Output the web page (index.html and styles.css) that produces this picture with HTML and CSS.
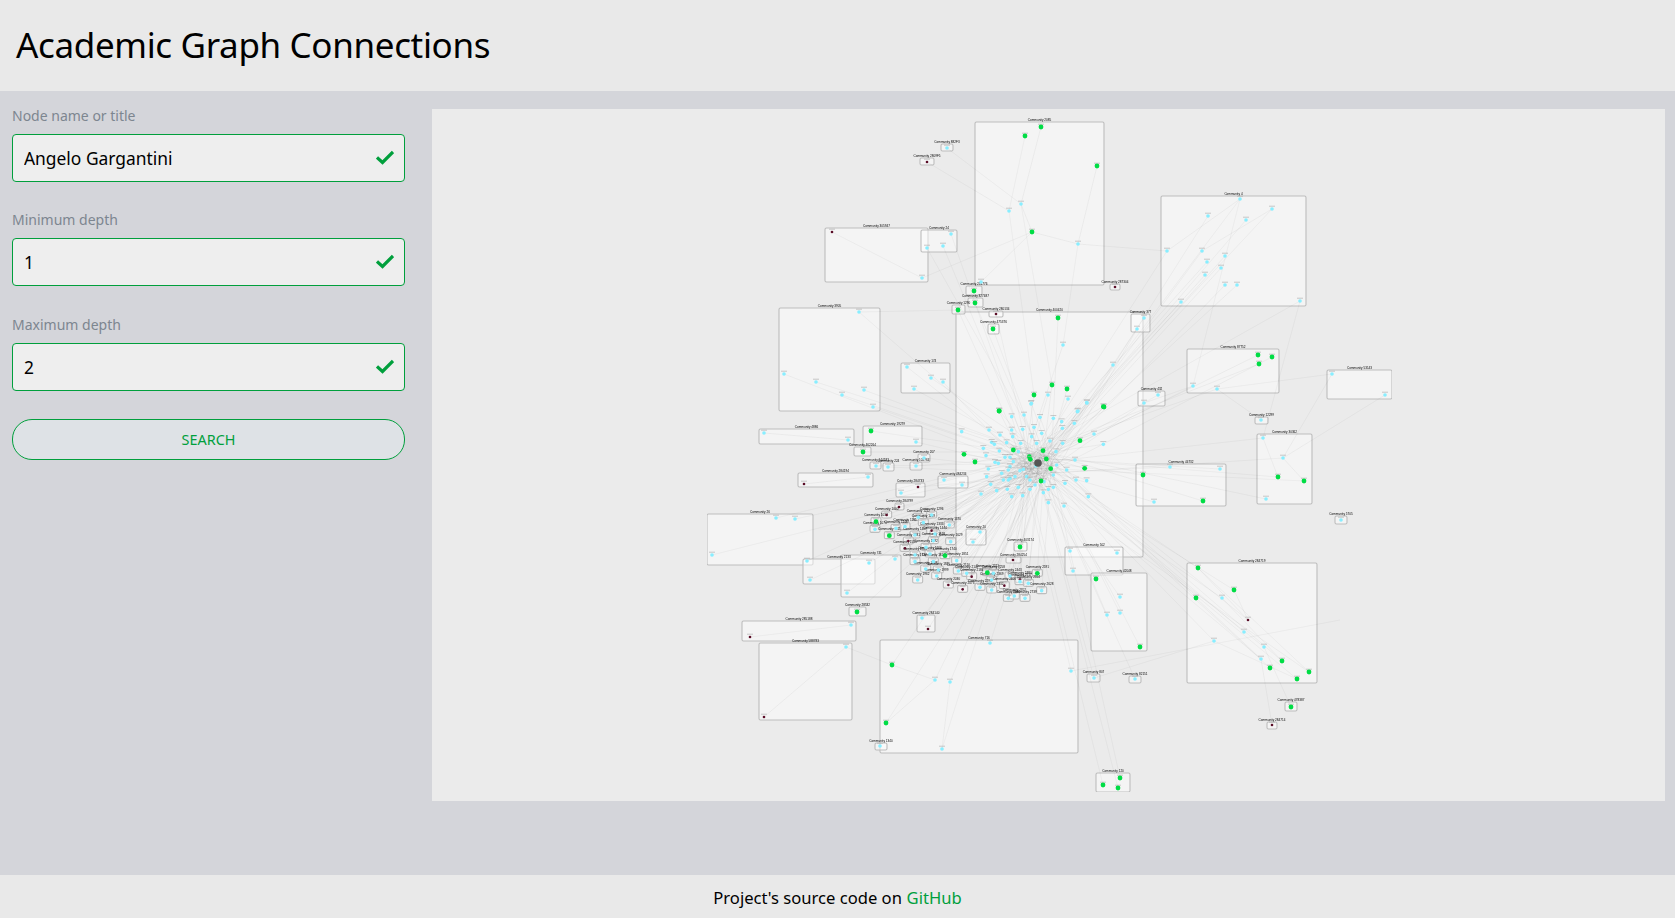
FILE: index.html
```html
<!DOCTYPE html>
<html lang="en">
<head>
    <meta charset="UTF-8">
    <meta name="viewport" content="width=device-width, initial-scale=1.0">
    <title>Academic Graph Connections</title>
    <link rel="stylesheet" href="styles.css">
</head>
<body>
    <header class="top-bar">
        <h1>Academic Graph Connections</h1>
    </header>

    <main class="content">
        <form class="search-form">
            <div class="field">
                <label for="nodeName">Node name or title</label>
                <div class="input-wrap">
                    <input id="nodeName" type="text" value="Angelo Gargantini">
                    <svg class="check" viewBox="0 0 18 14"><polyline points="1,7 6.5,12 17,1.5"/></svg>
                </div>
            </div>
            <div class="field">
                <label for="minDepth">Minimum depth</label>
                <div class="input-wrap">
                    <input id="minDepth" type="text" value="1">
                    <svg class="check" viewBox="0 0 18 14"><polyline points="1,7 6.5,12 17,1.5"/></svg>
                </div>
            </div>
            <div class="field">
                <label for="maxDepth">Maximum depth</label>
                <div class="input-wrap">
                    <input id="maxDepth" type="text" value="2">
                    <svg class="check" viewBox="0 0 18 14"><polyline points="1,7 6.5,12 17,1.5"/></svg>
                </div>
            </div>
            <button type="button" class="search-btn">SEARCH</button>
        </form>

        <div class="graph-panel">
            <!-- viewBox uses page coordinates so the data in graph.js is easy to read -->
            <svg id="graph" viewBox="432 109 1233 692">
                <defs>
                    <filter id="soft" x="0" y="0" width="100%" height="100%">
                        <feGaussianBlur stdDeviation="0.55"/>
                    </filter>
                </defs>
            </svg>
        </div>
    </main>

    <footer class="bottom-bar">
        Project's source code on <a href="#">GitHub</a>
    </footer>

    <script src="graph.js"></script>
</body>
</html>
```

FILE: styles.css
```css
* {
    box-sizing: border-box;
}
body {
    font-family: 'Noto Sans', sans-serif;
    margin: 0;
    min-height: 918px;
    display: flex;
    flex-direction: column;
    background-color: #d4d5da;
    color: #000;
}
.top-bar {
    height: 91px;
    display: flex;
    align-items: center;
    padding: 0 0 2px 16px;
    background-color: #e9e9e9;
}
.top-bar h1 {
    margin: 0;
    font-size: 35px;
    font-weight: 400;
    letter-spacing: -0.35px;
}
.content {
    flex: 1;
    display: grid;
    grid-template-columns: 432px 1fr;
    align-items: start;
}
.search-form {
    padding: 13px 27px 0 12px;
}
.field {
    margin-bottom: 26.4px;
}
.field label {
    display: block;
    height: 24px;
    margin-bottom: 6px;
    font-size: 14px;
    line-height: 24px;
    color: #7d8690;
}
.input-wrap {
    position: relative;
}
.input-wrap input {
    display: block;
    width: 100%;
    height: 48px;
    padding: 0 50px 0 11px;
    border: 1px solid #009f3c;
    border-radius: 4px;
    background-color: #eee;
    font-family: inherit;
    font-size: 17.4px;
    color: #000;
}
.check {
    position: absolute;
    top: 16px;
    right: 11px;
    width: 18px;
    height: 15px;
}
.check polyline {
    fill: none;
    stroke: #009f3c;
    stroke-width: 3.2;
}
.search-btn {
    display: block;
    width: 100%;
    height: 41px;
    margin-top: 28.4px;
    border: 1px solid #009f3c;
    border-radius: 20px;
    background-color: #dee2e6;
    font-family: inherit;
    font-size: 14.4px;
    color: #009f3c;
}
.graph-panel {
    height: 692px;
    margin: 18px 10px 0 0;
    background-color: #ebebeb;
}
#graph {
    display: block;
    width: 100%;
    height: 100%;
}
.box {
    fill: rgba(255, 255, 255, 0.45);
    stroke: #bdbdbd;
    stroke-width: 1.1;
}
.edge {
    stroke: rgba(0, 0, 0, 0.06);
    stroke-width: 0.7;
}
.box-label {
    font-family: 'Liberation Sans', sans-serif;
    font-size: 3.1px;
    fill: #000;
    text-anchor: middle;
}
.node-tag {
    stroke: #aaa;
    stroke-width: 0.6;
}
.node-c {
    fill: #88eeff;
}
.node-g {
    fill: #00dd44;
}
.node-m {
    fill: #5a0a28;
}
.hub {
    fill: #555;
}
.bottom-bar {
    height: 43px;
    display: flex;
    align-items: center;
    justify-content: center;
    gap: 0.28em;
    padding-top: 1px;
    background-color: #e9e9e9;
    font-size: 16.6px;
}
.bottom-bar a {
    color: #009f3c;
    text-decoration: none;
}
```

FILE: graph.js
```js
// each community: x0, y0, x1, y1, id, linked to hub?, nodes as type x y
const communities = [
    [975,122,1104,285,'2085',0,'g1041,127 g1025,136 g1097,166 g1032,232 c1021,204 c1009,211 c1078,244 c981,282'],
    [941,144,953,151,'882F3',0,'c947,148'],
    [920,158,934,165,'2809F5',0,'m927,162'],
    [825,228,928,282,'305947',0,'m832,232 c922,278'],
    [921,230,957,252,'24',1,'c951,234 c943,246 c927,248'],
    [956,312,1143,557,'400420',1,'g1058,318 c1063,345 c1113,365 g1052,385 g1067,389 g1034,395 c1048,395 c1068,399 c1087,403 g1104,407 g999,411 c1031,404 c1078,411'],
    [966,286,982,295,'251776',0,'g974,291'],
    [968,298,983,307,'327487',1,'g975,303'],
    [952,305,965,314,'1290',1,'g958,310'],
    [989,311,1003,317,'280134',1,'m996,314'],
    [988,324,999,334,'475376',1,'g993,329'],
    [1131,314,1150,332,'377',1,'c1144,318 c1137,329'],
    [779,308,880,411,'3905',1,'c859,312 c784,374 c816,382 c842,395 c864,390 c873,407'],
    [901,363,950,393,'174',1,'c907,367 c931,378 c943,382 c914,389'],
    [1138,391,1165,406,'432',1,'c1158,395 c1144,403'],
    [759,429,854,444,'4886',0,'c764,433 c848,440'],
    [863,426,922,446,'19279',1,'g871,431 c916,442'],
    [854,447,871,456,'462264',1,'g863,452'],
    [870,462,881,469,'144183',1,'c876,466'],
    [883,463,894,471,'224',1,'c888,467'],
    [910,462,922,470,'102764',1,'c916,466'],
    [918,454,930,462,'207',1,'c924,458'],
    [798,473,873,487,'284194',0,'m804,484 c868,477'],
    [938,476,968,488,'484234',1,'c944,480 c962,485'],
    [896,483,925,497,'284733',1,'m918,487 c901,493'],
    [895,503,904,510,'284799',1,'m899,507'],
    [707,514,813,565,'26',1,'c776,518 c795,519 c712,555'],
    [803,559,875,584,'2133',1,'c807,561 c810,580'],
    [841,555,901,597,'741',1,'c869,563 c895,559 c847,593'],
    [966,529,986,545,'20',1,'c980,532 c973,542'],
    [1014,542,1027,551,'403174',1,'g1020,547'],
    [1006,557,1021,563,'284254',1,'m1013,560'],
    [1065,547,1123,575,'502',1,'c1070,551 c1117,553 c1073,571'],
    [1091,573,1147,651,'42048',1,'g1096,579 c1120,597 c1107,615 c1120,613 g1140,647'],
    [849,607,866,616,'28532',1,'g857,612'],
    [917,615,935,632,'284140',1,'c922,618 m928,629'],
    [742,621,856,641,'285188',0,'m750,637 c851,625'],
    [759,643,852,720,'588783',0,'c846,647 m764,717'],
    [880,640,1078,753,'716',1,'c990,643 c1071,671 g892,665 c935,680 c950,682 g886,723 c942,749'],
    [875,743,887,750,'1340',0,'c880,746'],
    [1087,674,1100,682,'807',1,'c1094,678'],
    [1129,676,1141,683,'82151',1,'c1135,679'],
    [1096,773,1130,792,'120',1,'g1120,778 g1103,785 g1118,788'],
    [1187,563,1317,683,'284719',1,'g1198,568 g1234,590 g1196,598 c1222,598 m1248,620 c1244,632 c1214,641 c1264,647 c1261,659 g1282,661 g1270,668 g1309,672 g1297,679'],
    [1285,702,1297,711,'478387',0,'g1291,707'],
    [1267,722,1277,729,'284714',0,'m1272,725'],
    [1161,196,1306,306,'4',1,'c1240,199 c1272,209 c1208,216 c1246,220 c1167,251 c1202,251 c1225,256 c1207,262 c1221,268 c1205,275 c1225,285 c1237,285 c1181,302 c1300,301'],
    [1187,349,1279,393,'87752',1,'g1258,355 g1272,357 g1259,364 c1193,386 c1217,389'],
    [1327,370,1392,399,'53143',0,'c1332,374 c1385,395'],
    [1255,417,1268,424,'12299',0,'c1261,420'],
    [1257,434,1312,504,'30362',1,'c1263,438 c1283,458 g1278,477 g1304,481 c1266,499'],
    [1136,464,1226,506,'44732',1,'g1143,475 c1170,467 c1220,469 c1154,502 g1203,501'],
    [1110,284,1120,290,'287304',0,'m1115,287'],
    [1335,516,1347,524,'5705',0,'c1341,520']
];

// dense pile of tiny communities, coordinates are (x-860)*3 and (y-500)*3
const pile = 'm80,45 g48,65 c45,88 g88,107 c108,85 c135,80 c175,52 c190,68 c215,45 m215,92 c268,75 c165,105 c225,102 m145,123 c220,122 m135,145 c198,142 c272,125 c210,162 c165,165 g255,167 c165,185 c220,185 c290,182 c197,207 c235,210 c173,240 c230,228 m265,255 m308,268 c295,213 c320,220 m335,230 g382,218 c400,220 c360,262 c395,270 c395,240 m433,257 c450,228 m480,238 c480,245 c505,250 g532,220 c545,272 c445,295 c463,288 c495,295';

// nodes around the hub, coordinates are (x-950)*3 and (y-400)*3
const core = 'c244,10 c185,50 c222,45 c410,8 c382,35 c270,52 c310,55 c335,65 c373,70 c252,82 c218,88 c337,85 c117,90 c35,95 c185,90 c432,102 c150,105 c275,100 c188,110 c245,110 c300,123 c338,130 c125,127 c133,133 c170,128 c212,130 c260,130 c460,133 c100,145 c148,153 c205,155 c318,155 c108,167 c165,172 c180,172 c375,180 c135,187 c145,190 c190,185 c258,198 c115,207 c180,200 c175,210 c210,212 c350,210 c320,195 c220,208 c155,220 c110,230 c180,235 c195,230 c230,230 c310,225 c378,240 c410,242 c240,240 c282,245 c122,253 c175,240 c160,240 c205,262 c240,268 c280,278 c345,250 c310,262 c140,272 c172,268 c295,268 c93,282 c185,290 c218,287 c415,290 c295,308 c342,318 c255,255 g148,33 g460,20 g390,122 g190,150 g279,152 g42,163 g75,186 g238,170 g241,178 g289,177 g302,206 g404,205 g273,243';

const extraEdges = [
    [1025,136,1009,211], [1041,127,1021,204], [1097,166,1078,244], [1021,204,1032,232],
    [1032,232,1078,244], [1078,244,1167,251], [981,282,1032,232], [1032,232,922,278],
    [1021,204,947,148], [1009,211,927,162], [832,232,922,278], [1078,244,1063,345],
    [1009,211,1034,395], [1021,204,1052,385], [859,312,958,310], [1332,374,1217,389],
    [1385,395,1283,458], [1217,389,1261,420], [1300,301,1263,438], [1193,386,1144,403],
    [764,433,848,440], [804,484,868,477], [750,637,851,625], [846,647,764,717],
    [846,647,892,665], [892,665,935,680], [935,680,886,723], [950,682,942,749],
    [1071,671,1340,620], [1198,568,1248,620], [1234,590,1248,620], [1196,598,1261,659],
    [1222,598,1282,661], [1193,386,1240,199], [1167,251,1240,199], [1202,251,1272,209],
    [1198,568,1309,672], [1264,647,1291,707], [1261,659,1272,725], [1214,641,1297,679],
    [1214,641,1094,678], [1263,438,1278,477], [1283,458,1304,481], [1283,458,1332,374]
];

const hubX = 1038;
const hubY = 463;
const svgNs = 'http://www.w3.org/2000/svg';
const graph = document.getElementById('graph');

const layer = document.createElementNS(svgNs, 'g');
layer.setAttribute('filter', 'url(#soft)');
graph.appendChild(layer);

function add(parent, tag, attrs) {
    const el = document.createElementNS(svgNs, tag);
    for (const key in attrs) {
        el.setAttribute(key, attrs[key]);
    }
    parent.appendChild(el);
    return el;
}

function parseNodes(text, ox, oy, scale) {
    return text.split(' ').map(item => {
        const parts = item.slice(1).split(',');
        return { type: item[0], x: ox + parts[0] / scale, y: oy + parts[1] / scale };
    });
}

const boxes = add(layer, 'g', {});
const edges = add(layer, 'g', {});
const labels = add(layer, 'g', {});
const nodes = add(layer, 'g', {});

function addBox(x0, y0, x1, y1, id) {
    add(boxes, 'rect', { class: 'box', x: x0, y: y0, width: x1 - x0, height: y1 - y0, rx: 1.5 });
    const label = add(labels, 'text', { class: 'box-label', x: (x0 + x1) / 2, y: y0 - 1.2 });
    label.textContent = 'Community ' + id;
}

// links end a little around the hub, the centre is a tight knot rather than one point
let linkCount = 0;

function addNode(n, linked) {
    if (linked) {
        linkCount++;
        const dx = (linkCount * 7) % 31 - 15;
        const dy = (linkCount * 11) % 27 - 13;
        add(edges, 'line', { class: 'edge', x1: n.x, y1: n.y, x2: hubX + dx, y2: hubY + dy });
    }
    add(nodes, 'line', { class: 'node-tag', x1: n.x - 3, y1: n.y - 2.8, x2: n.x + 3, y2: n.y - 2.8 });
    const r = n.type === 'g' ? 2.4 : n.type === 'm' ? 1.3 : 1.8;
    add(nodes, 'circle', { class: 'node-' + n.type, cx: n.x, cy: n.y, r: r });
}

communities.forEach(c => {
    addBox(c[0], c[1], c[2], c[3], c[4]);
    parseNodes(c[6], 0, 0, 1).forEach(n => addNode(n, c[5] === 1));
});

parseNodes(pile, 860, 500, 3).forEach((n, i) => {
    addBox(n.x - 5, n.y - 4, n.x + 5, n.y + 3, 1000 + i * 37);
    addNode(n, true);
});

parseNodes(core, 950, 400, 3).forEach(n => addNode(n, true));

extraEdges.forEach(e => {
    add(edges, 'line', { class: 'edge', x1: e[0], y1: e[1], x2: e[2], y2: e[3] });
});

add(nodes, 'circle', { class: 'hub', cx: hubX, cy: hubY, r: 3.8 });
```
